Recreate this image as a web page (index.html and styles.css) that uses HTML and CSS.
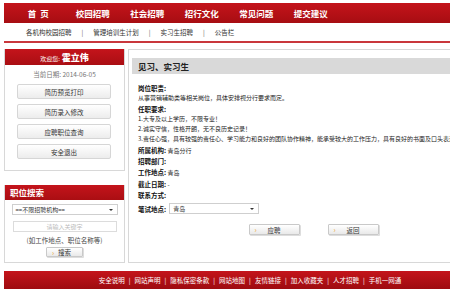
FILE: index.html
```html
<!DOCTYPE html>
<html lang="zh-CN">
<head>
<meta charset="utf-8">
<title>见习、实习生</title>
<link rel="stylesheet" href="styles.css">
</head>
<body>
<div class="page">
  <div class="nav">
    <a class="nav-item">首&nbsp;&nbsp;页</a>
    <a class="nav-item">校园招聘</a>
    <a class="nav-item">社会招聘</a>
    <a class="nav-item">招行文化</a>
    <a class="nav-item">常见问题</a>
    <a class="nav-item">提交建议</a>
  </div>
  <div class="subnav">
    <a>各机构校园招聘</a><span class="sep">|</span>
    <a>管理培训生计划</a><span class="sep">|</span>
    <a>实习生招聘</a><span class="sep">|</span>
    <a>公告栏</a>
  </div>
  <div class="main">
    <aside class="side">
      <div class="box user-box">
        <div class="box-head center"><span class="welcome">欢迎您:</span> <b class="uname">霍立伟</b></div>
        <div class="date">当前日期: 2014-06-05</div>
        <div class="menu">
          <a class="menu-btn">简历预览打印</a>
          <a class="menu-btn">简历录入修改</a>
          <a class="menu-btn">应聘职位查询</a>
          <a class="menu-btn">安全退出</a>
        </div>
      </div>
      <div class="box search-box">
        <div class="box-head">职位搜索</div>
        <div class="search-body">
          <div class="select wide"><span>==不限招聘机构==</span><i class="caret"></i></div>
          <div class="input">请输入关键字</div>
          <div class="hint">(如工作地点、职位名称等)</div>
          <a class="btn small"><i class="dot">›</i>搜索</a>
        </div>
      </div>
    </aside>
    <section class="content">
      <div class="title">见习、实习生</div>
      <div class="detail">
        <div class="label">岗位职责:</div>
        <div>从事营销辅助类等相关岗位，具体安排视分行要求而定。</div>
        <div class="label">任职要求:</div>
        <div>1.大专及以上学历，不限专业！</div>
        <div>2.诚实守信，性格开朗，无不良历史记录！</div>
        <div>3.责任心强，具有较强的责任心、学习能力和良好的团队协作精神，能承受较大的工作压力，具有良好的书面及口头表达能力！</div>
        <div><span class="label">所属机构:</span> 青岛分行</div>
        <div><span class="label">招聘部门:</span></div>
        <div><span class="label">工作地点:</span> 青岛</div>
        <div><span class="label">截止日期:</span> -</div>
        <div><span class="label">联系方式:</span></div>
        <div class="exam"><span class="label">笔试地点:</span><div class="select exam-sel"><span>青岛</span><i class="caret"></i></div></div>
        <div class="actions">
          <a class="btn"><i class="dot">›</i>应聘</a>
          <a class="btn"><i class="dot">›</i>返回</a>
        </div>
      </div>
    </section>
  </div>
  <div class="footer">
    <a>安全说明</a><span class="fsep">|</span><a>网站声明</a><span class="fsep">|</span><a>隐私保密条款</a><span class="fsep">|</span><a>网站地图</a><span class="fsep">|</span><a>友情链接</a><span class="fsep">|</span><a>加入收藏夹</a><span class="fsep">|</span><a>人才招聘</a><span class="fsep">|</span><a>手机一网通</a>
  </div>
</div>
</body>
</html>
```
FILE: styles.css
```css
* { box-sizing: border-box; }
html, body { margin: 0; padding: 0; background: #fff; overflow: hidden; }
body {
  font-family: "Noto Sans CJK SC", "Liberation Sans", sans-serif;
  color: #333;
  font-size: 6px;
}
a { text-decoration: none; color: inherit; }
.page {
  width: 492px;
  margin: 3px 0 0 4px;
}
.nav {
  height: 20px;
  background: linear-gradient(#c4141b, #a70d12);
  display: flex;
  padding-left: 7px;
  align-items: center;
}
.nav-item {
  width: 54.5px;
  text-align: center;
  color: #fff;
  font-weight: bold;
  font-size: 8.5px;
  line-height: 20px;
}
.subnav {
  height: 20px;
  padding-left: 22px;
  display: flex;
  align-items: center;
  font-size: 6.5px;
  color: #333;
  border-bottom: 2px solid #c9373c;
}
.subnav .sep { margin: 0 10px; color: #666; }
.main {
  display: flex;
  gap: 3px;
  margin-top: 6px;
  align-items: flex-start;
}
.side {
  width: 121px;
  display: flex;
  flex-direction: column;
  gap: 14px;
}
.box {
  border: 1px solid #d8d8d8;
  border-top: none;
}
.box-head {
  height: 16px;
  background: linear-gradient(#c4141b, #aa0e13);
  color: #fff;
  font-weight: bold;
  font-size: 8.5px;
  line-height: 16px;
  padding-left: 5px;
}
.box-head.center { text-align: center; padding-left: 0; }
.welcome { font-weight: normal; font-size: 6px; }
.uname { font-size: 9px; }
.user-box { height: 122px; }
.date {
  text-align: center;
  color: #777;
  font-size: 6.5px;
  line-height: 9px;
  margin-top: 5px;
}
.menu {
  display: flex;
  flex-direction: column;
  gap: 5px;
  padding: 5px 13px 0 12px;
}
.menu-btn {
  height: 15px;
  line-height: 14px;
  text-align: center;
  font-size: 6.5px;
  color: #333;
  border: 1px solid #d6d6d6;
  border-radius: 2px;
  background: linear-gradient(#ffffff, #ececec);
}
.search-box { height: 78px; }
.search-box .box-head { height: 15px; line-height: 15px; padding-left: 5px; }
.search-body {
  padding: 4px 6px 0 6px;
  display: flex;
  flex-direction: column;
  align-items: center;
}
.select {
  position: relative;
  height: 11px;
  border: 1px solid #cfcfcf;
  background: #fff;
  font-size: 6px;
  line-height: 9px;
  padding-left: 3px;
  color: #333;
}
.select.wide { width: 106px; }
.caret {
  position: absolute;
  right: 4px;
  top: 4px;
  width: 0; height: 0;
  border-left: 2px solid transparent;
  border-right: 2px solid transparent;
  border-top: 2px solid #333;
}
.input {
  width: 104px;
  height: 11px;
  margin-top: 6px;
  border: 1px solid #dcdcdc;
  text-align: center;
  color: #bbb;
  font-size: 6px;
  line-height: 9px;
}
.hint {
  margin-top: 3px;
  font-size: 6.5px;
  color: #444;
  line-height: 10px;
}
.btn {
  display: inline-flex;
  align-items: center;
  justify-content: center;
  position: relative;
  width: 51px;
  height: 11px;
  border: 1px solid #c9c9c9;
  border-radius: 1px;
  background: linear-gradient(#ffffff, #e9e9e9);
  box-shadow: 1px 1px 0 #ddd;
  font-size: 6.5px;
  color: #333;
}
.btn .dot {
  position: absolute;
  left: 5px;
  top: 0;
  font-style: normal;
  color: #e8a020;
  font-size: 7px;
  line-height: 9px;
}
.btn.small { width: 37px; height: 10px; margin-top: 2px; }
.content {
  flex: 1;
  height: 214px;
  border: 1px solid #d8d8d8;
  padding: 8px 3px 0 3px;
}
.title {
  height: 16px;
  background: #d9d9d9;
  padding-left: 6px;
  font-size: 8.5px;
  font-weight: bold;
  line-height: 17px;
  color: #222;
}
.detail {
  padding: 9px 0 0 6px;
  font-size: 6px;
  line-height: 10.3px;
  color: #222;
}
.label { font-weight: bold; font-size: 6.5px; color: #111; }
.exam {
  display: flex;
  align-items: center;
  margin-top: 2px;
  gap: 3px;
}
.exam-sel { width: 90px; }
.actions {
  display: flex;
  justify-content: center;
  gap: 28px;
  margin-top: 10px;
  padding-right: 3px;
}
.footer {
  margin-top: 8px;
  height: 18px;
  background: linear-gradient(#c4141b, #9e0b10);
  color: #fff;
  font-size: 6.5px;
  line-height: 18px;
  text-align: center;
}
.fsep { margin: 0 4px; }
```
